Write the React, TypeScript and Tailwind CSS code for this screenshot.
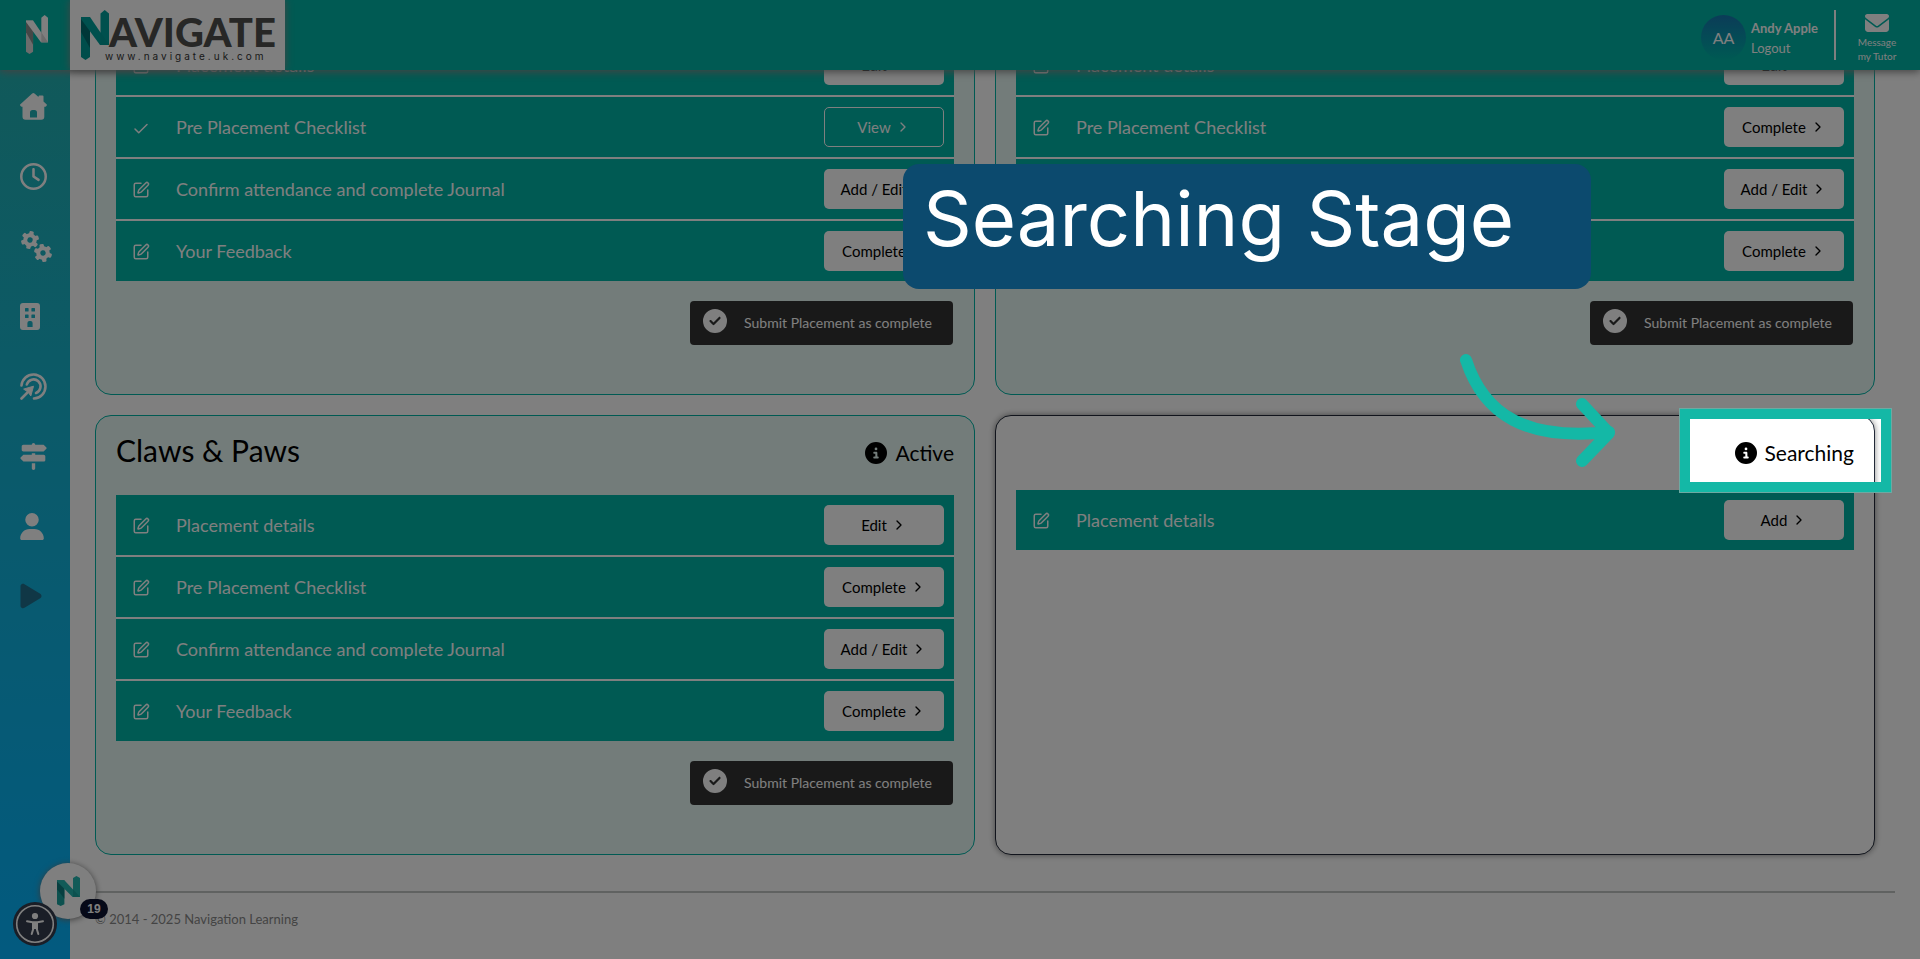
import type { ReactNode } from "react";
import { Check, ChevronRight, SquarePen } from "lucide-react";
import {
  FaCircleCheck,
  FaCircleInfo,
  FaEnvelope,
  FaPlay,
  FaRegClock,
  FaSignsPost,
  FaUser,
} from "react-icons/fa6";

type Task = { label: string; action: string; done?: boolean };

const fullTasks = (first: string): Task[] => [
  { label: "Placement details", action: first },
  { label: "Pre Placement Checklist", action: "Complete" },
  { label: "Confirm attendance and complete Journal", action: "Add / Edit" },
  { label: "Your Feedback", action: "Complete" },
];

const firstPlacement: Task[] = fullTasks("Edit").map((t, i) =>
  i === 1 ? { ...t, action: "View", done: true } : t,
);

function NMark({ className, light, mid, dark }: { className: string; light: string; mid: string; dark: string }) {
  return (
    <svg viewBox="0 0 28 50" className={className} preserveAspectRatio="none" aria-hidden="true">
      <path d="M0 7H9V47L4.500 50L0 47Z" fill={mid} />
      <path d="M0 7L9 19V38L0 22Z" fill={dark} />
      <path d="M0 7H9L28 35H19L0 9Z" fill={light} />
      <path d="M19.500 3.500L23.700 0L28 3.500V35H19.500Z" fill={light} />
      <path d="M19.500 22L28 35H19.500Z" fill={mid} />
    </svg>
  );
}

function HouseIcon() {
  return (
    <svg viewBox="0 0 27 27" className="size-[27px]" fill="currentColor" aria-hidden="true">
      <path
        fillRule="evenodd"
        d="M12.2.6a1.7 1.7 0 0 1 2.3 0L18.500 4V3.600a1 1 0 0 1 1-1h3a1 1 0 0 1 1 1v4.900l3 2.700a1 1 0 0 1 .2 1.300l-.5.8a1 1 0 0 1-.8.4H24.300v10a3 3 0 0 1-3 3H5.500a3 3 0 0 1-3-3v-10H1.600a1 1 0 0 1-.8-.4l-.6-.8a1 1 0 0 1 .2-1.300ZM10 24.500h7v-5a2.500 2.500 0 0 0-2.500-2.500h-2a2.500 2.500 0 0 0-2.500 2.500Z"
      />
    </svg>
  );
}

function Cog({ x, y, turn }: { x: number; y: number; turn: number }) {
  return (
    <g transform={`translate(${x} ${y}) rotate(${turn})`}>
      {[0, 60, 120, 180, 240, 300].map((a) => (
        <rect key={a} x="-2.200" y="-9" width="4.400" height="5" rx="1.200" transform={`rotate(${a})`} fill="currentColor" />
      ))}
      <circle r="4.700" fill="none" stroke="currentColor" strokeWidth="4" />
    </g>
  );
}

function CogsIcon() {
  return (
    <svg viewBox="0 0 33 33" className="size-[33px]" aria-hidden="true">
      <Cog x={10} y={10} turn={12} />
      <Cog x={23} y={23} turn={-10} />
    </svg>
  );
}

function BuildingIcon() {
  return (
    <svg viewBox="0 0 20 27" className="h-[27px] w-5" fill="currentColor" aria-hidden="true">
      <path
        fillRule="evenodd"
        d="M3 0H17a3 3 0 0 1 3 3V24a3 3 0 0 1-3 3H3a3 3 0 0 1-3-3V3a3 3 0 0 1 3-3ZM5 5.500V8a.6.6 0 0 0 .6.6H8a.6.6 0 0 0 .6-.6V5.500A.6.6 0 0 0 8 5H5.600a.6.6 0 0 0-.6.5ZM11.400 5.500V8a.6.6 0 0 0 .6.6h2.400A.6.6 0 0 0 15 8V5.500a.6.6 0 0 0-.6-.5H12a.6.6 0 0 0-.6.5ZM5 12v2.400a.6.6 0 0 0 .6.6H8a.6.6 0 0 0 .6-.6V12a.6.6 0 0 0-.6-.6H5.600A.6.6 0 0 0 5 12ZM11.400 12v2.400a.6.6 0 0 0 .6.6h2.400a.6.6 0 0 0 .6-.6V12a.6.6 0 0 0-.6-.6H12a.6.6 0 0 0-.6.6ZM7.400 24h5.200v-4a2 2 0 0 0-2-2H9.400a2 2 0 0 0-2 2Z"
      />
    </svg>
  );
}

function TargetIcon() {
  return (
    <svg viewBox="0 0 27 27" className="size-[27px]" fill="none" stroke="currentColor" strokeWidth="2.600" strokeLinecap="round" aria-hidden="true">
      <path d="M1.500 12.500A12 12 0 1 1 14 25.500" />
      <path d="M6.800 11.500A7 7 0 1 1 16 20" />
      <path d="M1.500 25.500L8 19" />
      <path d="M4 16L13.500 13.200L10.800 23L8.500 19.500Z" fill="currentColor" strokeWidth="1" strokeLinejoin="round" />
    </svg>
  );
}

const navItems: { name: string; icon: ReactNode }[] = [
  { name: "Home", icon: <HouseIcon /> },
  { name: "Timesheets", icon: <FaRegClock className="size-[27px]" /> },
  { name: "Settings", icon: <CogsIcon /> },
  { name: "Employers", icon: <BuildingIcon /> },
  { name: "Goals", icon: <TargetIcon /> },
  { name: "Pathways", icon: <FaSignsPost className="size-[27px]" /> },
  { name: "Profile", icon: <FaUser className="h-[27px] w-6" /> },
  { name: "Videos", icon: <FaPlay className="h-7 w-[22px] text-[#206f8c]" /> },
];

function Sidebar() {
  return (
    <nav className="flex w-[70px] shrink-0 flex-col bg-linear-to-b from-[#22b3b4] to-[#06b4ff] pt-px text-white">
      {navItems.map((item) => (
        <a key={item.name} href="#" aria-label={item.name} className="flex h-[70px] items-center pl-5">
          {item.icon}
        </a>
      ))}
    </nav>
  );
}

function Header() {
  return (
    <header className="relative z-10 flex h-[70px] shrink-0 bg-[#00b4a6] text-white shadow-[0_2px_8px_#888]">
      <a href="#" aria-label="Menu" className="flex w-[70px] items-start pt-[15px] pl-[26px]">
        <NMark className="h-[39px] w-[22px]" light="#ffffff" mid="#d8d8d8" dark="#8a8f8f" />
      </a>
      <a href="#" aria-label="Navigate home" className="flex w-[215px] items-start bg-white pt-[10px] pl-[11px] shadow-[0_0_8px_#888]">
        <NMark className="h-[50px] w-[28px]" light="#00a19c" mid="#009a96" dark="#006f70" />
        <span className="flex flex-col pt-1">
          <span className="font-[Lato,sans-serif] text-[40px] leading-9 font-black text-[#4f4f4c]">AVIGATE</span>
          <span className="-ml-1 font-[Inter,sans-serif] text-[10px] leading-3 tracking-[0.3em] text-[#333]">
            www.navigate.uk.com
          </span>
        </span>
      </a>
      <div className="ml-auto flex items-start">
        <span className="mt-[15px] flex size-[45px] items-center justify-center rounded-full bg-linear-to-b from-[#1678b0] to-[#00b4a6] text-base">
          AA
        </span>
        <div className="mt-[18px] ml-[5px] flex w-[83px] flex-col text-[13px] leading-5">
          <strong>Andy Apple</strong>
          <a href="#">Logout</a>
        </div>
        <span className="mt-[10px] h-[50px] w-[2px] bg-white" />
        <a href="#" className="mr-[13px] ml-[11px] flex w-[60px] flex-col items-center pt-[11px] text-center text-[10px] leading-[14px]">
          <FaEnvelope className="size-6" />
          <span>
            Message
            <br />
            my Tutor
          </span>
        </a>
      </div>
    </header>
  );
}

function TaskRow({ task }: { task: Task }) {
  const Icon = task.done ? Check : SquarePen;
  return (
    <li className="flex h-[60px] items-center bg-[#00b4a6] pr-[10px] pl-4 text-white">
      <Icon className={task.done ? "mt-1 size-[18px]" : "mt-[2px] size-[18px]"} strokeWidth={2} aria-hidden="true" />
      <span className="ml-[26px] grow text-[18px] leading-6">{task.label}</span>
      <button
        type="button"
        className={
          task.done
            ? "flex h-10 w-[120px] items-center justify-center gap-1 rounded-[5px] border border-white text-[15px] text-white"
            : "flex h-10 w-[120px] items-center justify-center gap-1 rounded-[5px] bg-white text-[15px] text-black"
        }
      >
        {task.action}
        <ChevronRight className="size-4" aria-hidden="true" />
      </button>
    </li>
  );
}

function PlacementCard({ title, status, tasks }: { title?: string; status?: string; tasks: Task[] }) {
  const searching = status === "Searching";
  return (
    <section
      className={
        searching
          ? "min-h-[440px] rounded-2xl border border-[#222938] bg-white px-[20px] shadow-[0_0_6px_#888]"
          : "min-h-[440px] rounded-2xl border border-[#00b4a6] bg-[#e6f8f4] px-[20px]"
      }
    >
      <div className={searching ? "flex h-[74px] items-start justify-between" : "flex h-[79px] items-start justify-between"}>
        <h2 className="pt-[14px] text-[30px] leading-10 text-black">{title}</h2>
        {status && (
          <p className="flex items-center gap-2 pt-[22px] text-[21px] leading-[30px] text-black">
            <FaCircleInfo className="size-[22px]" aria-hidden="true" />
            {status}
          </p>
        )}
      </div>
      <ul className="flex flex-col gap-[2px] bg-white">
        {tasks.map((t) => (
          <TaskRow key={t.label} task={t} />
        ))}
      </ul>
      {!searching && (
        <div className="mt-[20px] flex justify-end">
          <button type="button" className="mr-px flex h-11 w-[263px] items-center rounded-[4px] bg-[#333] pl-[13px] text-[15px] text-white">
            <FaCircleCheck className="mb-1 size-6" aria-hidden="true" />
            <span className="grow pr-1 text-center text-sm">Submit Placement as complete</span>
          </button>
        </div>
      )}
    </section>
  );
}

function Widgets() {
  return (
    <div className="absolute bottom-3 left-3 z-20 h-[84px] w-[94px]">
      <button type="button" aria-label="Open chat" className="absolute top-0 left-7 flex size-14 items-center justify-center rounded-full bg-white shadow-[0_1px_6px_#777]">
        <NMark className="h-[30px] w-[23px]" light="#25b6b0" mid="#1aa39f" dark="#0e7f80" />
      </button>
      <span className="absolute top-9 left-[68px] flex h-5 w-7 items-center justify-center rounded-full bg-[#0d1330] font-['Liberation_Sans',sans-serif] text-xs font-bold text-white">
        19
      </span>
      <button type="button" aria-label="Accessibility options" className="absolute top-[39px] left-[1px] size-11">
        <svg viewBox="0 0 44 44" aria-hidden="true">
          <circle cx="22" cy="22" r="22" fill="#343c4e" />
          <circle cx="22" cy="22" r="18.300" fill="none" stroke="#fff" strokeWidth="1.600" />
          <circle cx="22" cy="14" r="3.100" fill="#fff" />
          <path d="M14 19.300L19.500 20.300H24.500L30 19.300M20.500 21V26L18.700 32M23.500 21V26L25.300 32" fill="none" stroke="#fff" strokeWidth="2" strokeLinecap="round" />
          <path d="M19 20H25V27H19Z" fill="#fff" />
        </svg>
      </button>
    </div>
  );
}

function Walkthrough() {
  return (
    <>
      <div className="absolute right-[39px] bottom-[477px] z-30 h-[63px] w-[191px] shadow-[0_0_0_9999px_rgba(0,0,0,0.5)]" />
      <div className="absolute right-[29px] bottom-[467px] z-40 h-[83px] w-[211px] border-10 border-[#14b8a6] outline outline-[#6da9a2]" />
      <svg className="absolute right-[300px] bottom-[488px] z-40 h-[120px] w-[160px]" viewBox="0 0 160 120" fill="none" stroke="#14b8a6" strokeWidth="12" strokeLinecap="round" strokeLinejoin="round" aria-hidden="true">
        <path d="M6 9C24 64 66 90 149 81M122 53L149 82L122 110" />
      </svg>
      <div className="absolute right-[329px] bottom-[670px] z-40 flex h-[125px] w-[688px] rounded-2xl bg-[#0c4a6e] pl-5">
        <p className="pt-1 font-[Inter,sans-serif] text-[76px] leading-[100px] whitespace-nowrap text-white">Searching Stage</p>
      </div>
    </>
  );
}

export default function App() {
  return (
    <div className="relative flex h-screen flex-col overflow-hidden bg-white font-[Lato,sans-serif]">
      <Header />
      <div className="flex min-h-0 grow">
        <Sidebar />
        <main className="flex grow flex-col justify-end overflow-hidden pl-[25px]">
          <div className="mr-[45px] grid shrink-0 grid-cols-2 gap-5">
            <PlacementCard tasks={firstPlacement} />
            <PlacementCard tasks={fullTasks("Edit")} />
            <PlacementCard title="Claws & Paws" status="Active" tasks={fullTasks("Edit")} />
            <PlacementCard status="Searching" tasks={[{ label: "Placement details", action: "Add" }]} />
          </div>
          <footer className="mt-9 mr-[25px] h-[68px] shrink-0 border-t-2 border-[#c0c4c3] pt-4 text-[13px] leading-5 text-[#888]">
            © 2014 - 2025 Navigation Learning
          </footer>
        </main>
      </div>
      <Widgets />
      <Walkthrough />
    </div>
  );
}
